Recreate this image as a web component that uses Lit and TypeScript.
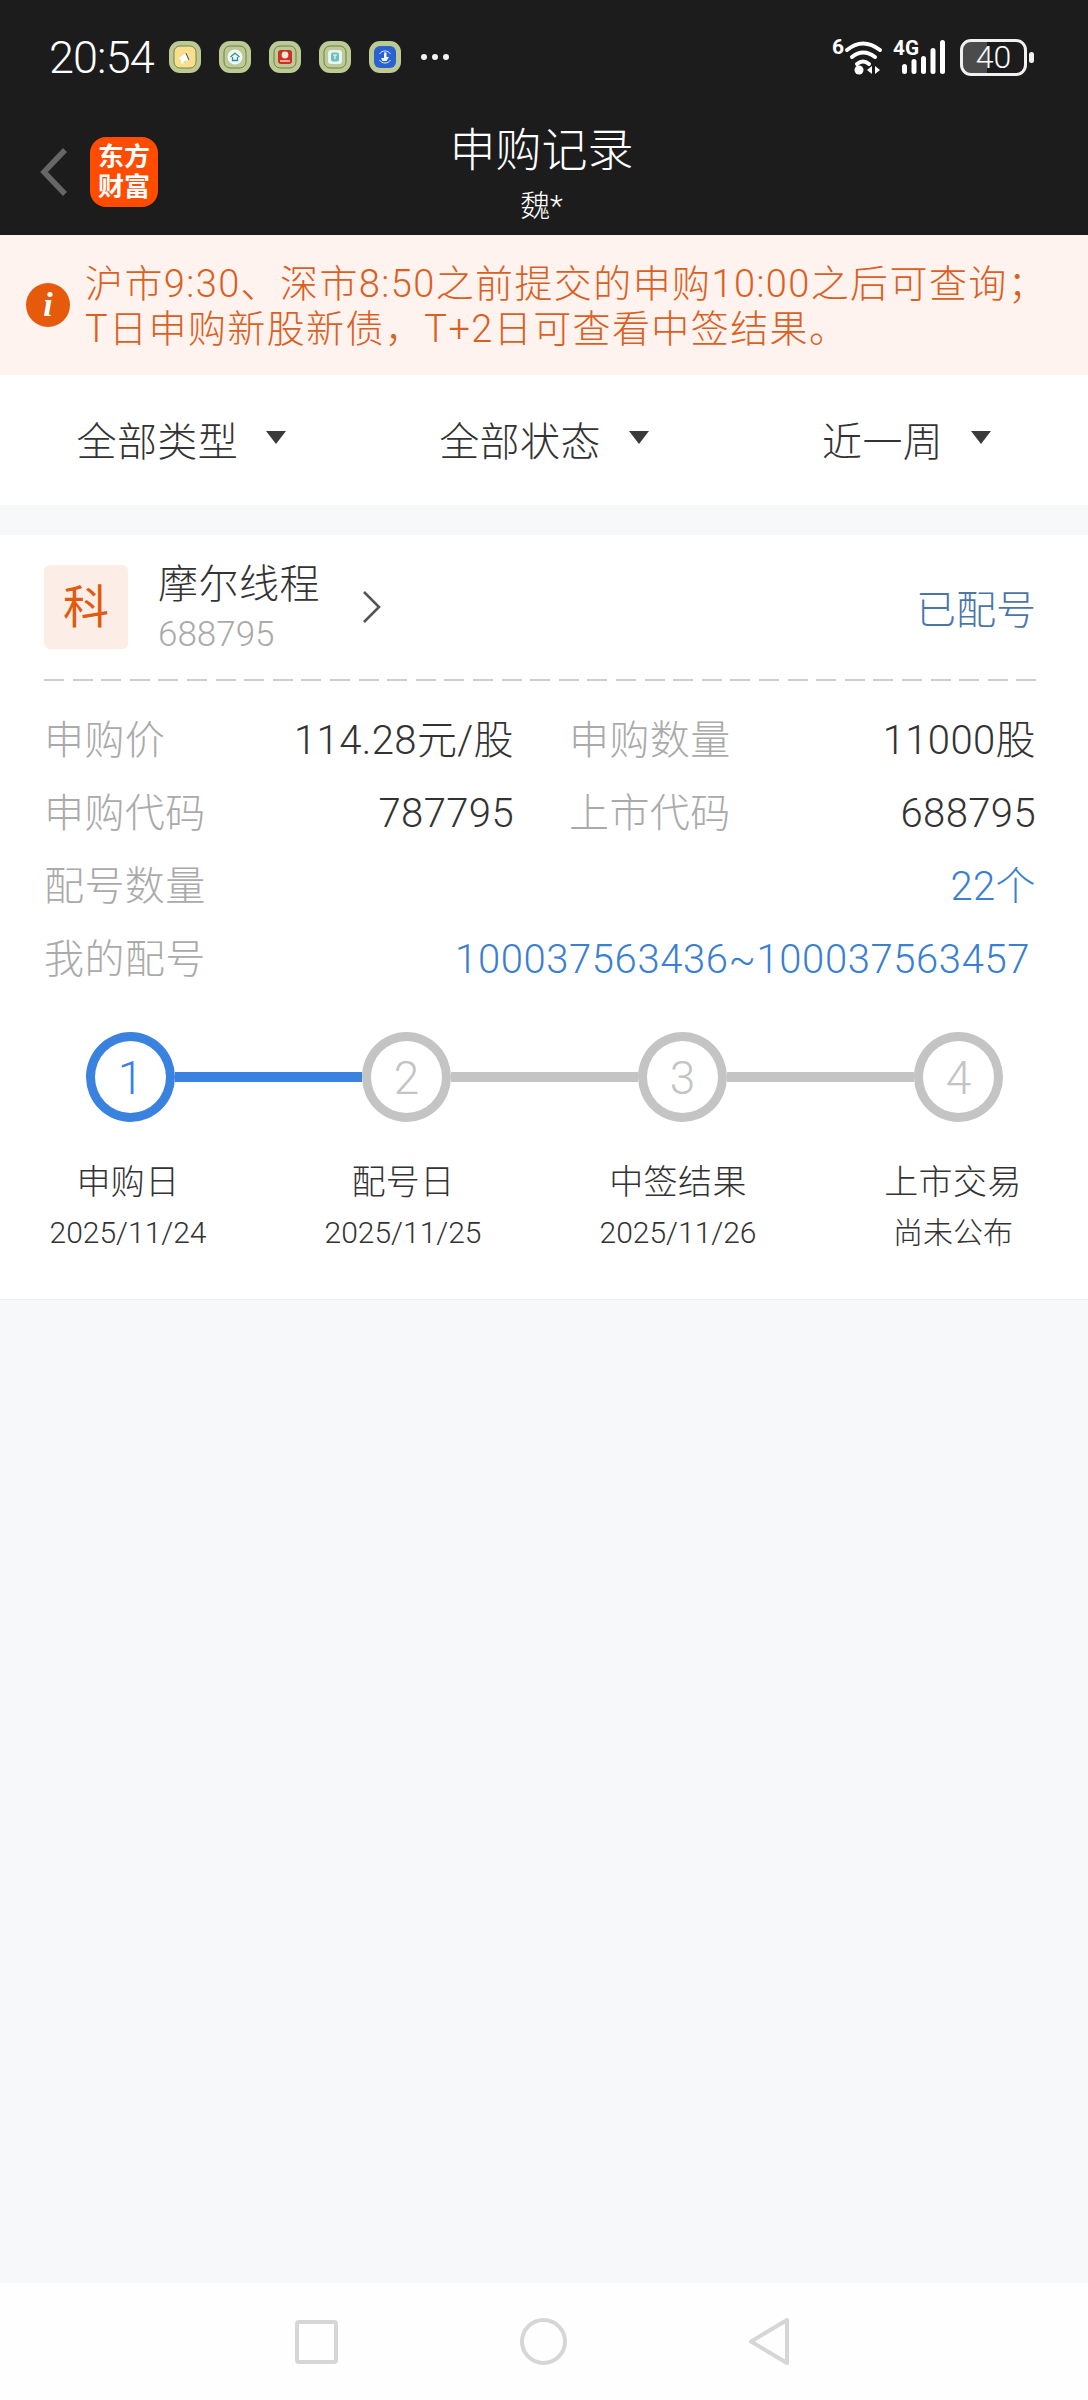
import { LitElement, html, css, svg } from "lit";
import { customElement } from "lit/decorators.js";
import { classMap } from "lit/directives/class-map.js";

const FILTERS = ["全部类型", "全部状态", "近一周"];

const STEPS = [
  { label: "申购日", date: "2025/11/24" },
  { label: "配号日", date: "2025/11/25" },
  { label: "中签结果", date: "2025/11/26" },
  { label: "上市交易", date: "尚未公布" },
];

// tiny notification badges in the status bar
const badge = (inner: unknown) => html`
  <svg class="badge" viewBox="0 0 32 32" width="32" height="32">
    <rect width="32" height="32" rx="11" fill="#bccb94"></rect>
    ${inner}
  </svg>
`;

const BADGES = [
  badge(svg`
    <rect x="5" y="5" width="22" height="22" rx="6" fill="#f7df8e" stroke="#6b6a3c" stroke-width="0.8"></rect>
    <path d="M10 17l8-6 3 8-6 1-1 3-2-1 0-3z" fill="#fff"></path>
    <path d="M17 12l3 7" stroke="#6d5a3a" stroke-width="1.2"></path>
  `),
  badge(svg`
    <rect x="5" y="5" width="22" height="22" rx="6" fill="none" stroke="#5d6a42" stroke-width="0.8"></rect>
    <circle cx="16" cy="16" r="7.5" fill="#f2f8f4"></circle>
    <path d="M11.5 16l4.5-4 4.5 4M13.5 16v3.5h5V16" fill="none" stroke="#2f8f96" stroke-width="1.3"></path>
  `),
  badge(svg`
    <rect x="5" y="5" width="22" height="22" rx="6" fill="none" stroke="#5d6a42" stroke-width="0.8"></rect>
    <rect x="9" y="9" width="14" height="14" rx="3" fill="#cf2f22"></rect>
    <circle cx="16" cy="14" r="3.4" fill="#fbe6dc"></circle>
    <path d="M11 20h10" stroke="#f6c8b8" stroke-width="1.6"></path>
  `),
  badge(svg`
    <rect x="5" y="5" width="22" height="22" rx="6" fill="none" stroke="#5d6a42" stroke-width="0.8"></rect>
    <rect x="9" y="9" width="14" height="14" rx="3" fill="#e6f5ef"></rect>
    <rect x="12" y="11.5" width="8" height="9" rx="2" fill="#6fc0bc"></rect>
    <path d="M14 14h4M16 14v4" stroke="#e6f5ef" stroke-width="1.2"></path>
  `),
  badge(svg`
    <rect x="5" y="5" width="22" height="22" rx="6" fill="#2a62d2"></rect>
    <path d="M10.5 13a6.5 6.5 0 0 1 11 0M10.5 19a6.5 6.5 0 0 0 11 0" fill="none" stroke="#e4ecfb" stroke-width="1"></path>
    <path d="M15 11.5h2.5V16H20l-2.5 4h-4L12 17h3z" fill="#f2f6fd"></path>
  `),
];

@customElement("app-root")
export class AppRoot extends LitElement {
  static styles = css`
    :host {
      display: flex;
      flex-direction: column;
      min-height: 2400px;
      background: #f7f8fa;
      font-family: Roboto, "Noto Sans CJK SC", sans-serif;
      font-weight: 300;
      color: #333;
    }

    /* Status bar */
    .status {
      height: 112px;
      background: #1c1c1c;
      color: #fff;
      display: flex;
      align-items: center;
      padding: 2px 54px 0 49px;
      box-sizing: border-box;
    }
    .time {
      font-size: 45px;
      letter-spacing: -0.9px;
      width: 120px;
    }
    .badges {
      display: flex;
      gap: 18px;
    }
    .badge {
      display: block;
    }
    .more {
      display: flex;
      gap: 5px;
      margin-left: 20px;
    }
    .more i {
      width: 6px;
      height: 6px;
      border-radius: 50%;
      background: #f2f2f2;
    }
    .status-right {
      margin-left: auto;
      display: flex;
      align-items: center;
    }
    .signal {
      display: block;
      margin-right: 15px;
    }
    .signal text {
      fill: #fff;
      font-family: Roboto, sans-serif;
      font-weight: 700;
      font-size: 21px;
    }
    .battery {
      width: 67px;
      height: 37px;
      box-sizing: border-box;
      border: 3px solid #f0f0f0;
      border-radius: 11px;
      background: linear-gradient(90deg, #4b4b4b 24px, transparent 24px);
      font-size: 32px;
      line-height: 31px;
      text-align: center;
    }
    .nub {
      width: 5px;
      height: 11px;
      border-radius: 3px;
      background: #f0f0f0;
      margin-left: 2px;
    }

    /* App bar */
    .appbar {
      height: 123px;
      background: #1c1c1c;
      color: #fff;
      display: grid;
      grid-template-columns: 1fr auto 1fr;
      align-items: center;
      padding-right: 5px;
    }
    .brand {
      display: flex;
      align-items: center;
      padding-left: 40px;
      gap: 22px;
      margin-top: -3px;
    }
    .back {
      display: block;
    }
    .logo {
      width: 68px;
      height: 70px;
      border-radius: 16px;
      background: #ff4c00;
      color: #fff;
      font-size: 26px;
      font-weight: 700;
      line-height: 30px;
      text-align: center;
      display: flex;
      align-items: center;
      justify-content: center;
    }
    .heading {
      text-align: center;
      margin-top: -2px;
    }
    .title {
      font-size: 46px;
      line-height: 58px;
    }
    .subtitle {
      font-size: 30px;
      line-height: 38px;
      margin-top: 8px;
    }

    /* Notice strip */
    .notice {
      height: 140px;
      background: #fef3ef;
      color: #db5f1f;
      display: flex;
      align-items: center;
      gap: 15px;
      padding-left: 26px;
      font-size: 38px;
      line-height: 45px;
      letter-spacing: 1.4px;
      box-sizing: border-box;
    }
    .notice-text {
      margin-top: 4px;
    }
    .info {
      width: 44px;
      height: 44px;
      border-radius: 50%;
      background: #e65a0c;
      color: #fff;
      flex: none;
      font: italic 700 34px/44px "Liberation Serif", serif;
      letter-spacing: 0;
      text-align: center;
    }

    /* Filter row */
    .filters {
      height: 130px;
      background: #fff;
      display: grid;
      grid-template-columns: repeat(3, 1fr);
      align-items: center;
      font-size: 40px;
      letter-spacing: 0.4px;
      padding-bottom: 3px;
      box-sizing: border-box;
    }
    .filter {
      display: flex;
      align-items: center;
      justify-content: center;
      gap: 28px;
    }
    .caret {
      width: 0;
      height: 0;
      border-left: 10px solid transparent;
      border-right: 10px solid transparent;
      border-top: 13px solid #3a3a3a;
      margin-top: -2px;
    }

    /* Subscription card */
    .card {
      margin-top: 30px;
      background: #fff;
      padding: 30px 52px 0 44px;
      height: 765px;
      box-sizing: border-box;
      border-bottom: 1px solid #eeeeee;
    }
    .card-head {
      display: flex;
      align-items: center;
      height: 84px;
    }
    .tag {
      width: 84px;
      height: 84px;
      border-radius: 6px;
      background: #fceee6;
      color: #e05a12;
      font-size: 46px;
      font-weight: 400;
      line-height: 84px;
      text-align: center;
      flex: none;
    }
    .name-block {
      margin-left: 30px;
      height: 84px;
    }
    .name {
      font-size: 40px;
      line-height: 50px;
      letter-spacing: 0.5px;
      margin-top: -5px;
    }
    .code {
      font-size: 35px;
      line-height: 40px;
      color: #aaa;
      margin-top: 5px;
    }
    .chevron {
      display: block;
      margin-left: 42px;
    }
    .state {
      margin-left: auto;
      font-size: 40px;
      color: #4a76a8;
    }
    .dash {
      height: 2px;
      margin: 30px 0 19px;
      background: repeating-linear-gradient(90deg, #cdcdcd 0 20px, transparent 20px 28.6px);
    }

    .fields {
      display: grid;
      grid-template-columns: 470px 467px;
      column-gap: 55px;
      grid-auto-rows: 73px;
      align-items: center;
      font-size: 40px;
      letter-spacing: 0.4px;
    }
    .field {
      display: flex;
      justify-content: space-between;
      align-items: baseline;
      color: #333;
    }
    .field.wide {
      grid-column: 1 / -1;
    }
    .field span:first-child {
      color: #aaa;
    }
    .field .link {
      color: #3a7fd0;
    }
    .inset {
      padding-right: 6px;
    }
    .inset .link {
      letter-spacing: 0.6px;
    }

    /* Progress steps */
    .track {
      display: flex;
      align-items: center;
      margin: 40px 33px 0 42px;
    }
    .dot {
      width: 89px;
      height: 90px;
      box-sizing: border-box;
      border: 9px solid #c4c4c4;
      border-radius: 50%;
      color: #c4c4c4;
      font-size: 46px;
      line-height: 74px;
      text-align: center;
      flex: none;
    }
    .dot.active {
      border-color: #3a82e0;
      color: #3a82e0;
    }
    .link-line {
      flex: 1;
      height: 10px;
      background: #c4c4c4;
    }
    .link-line.active {
      background: #3a82e0;
    }
    .step-labels {
      display: flex;
      justify-content: space-between;
      margin: 34px -1px 0 0;
    }
    .step {
      width: 168px;
      text-align: center;
      white-space: nowrap;
    }
    .step-label {
      font-size: 34px;
      line-height: 52px;
      letter-spacing: 0.4px;
    }
    .step-date {
      font-size: 30px;
      line-height: 50px;
    }

    .spacer {
      flex: 1;
    }

    /* System navigation */
    .nav {
      height: 117px;
      background: #fefefe;
      display: flex;
      align-items: center;
      justify-content: center;
      gap: 182px;
      padding-right: 4px;
    }
    .nav svg {
      display: block;
      fill: none;
      stroke: #d6d6d6;
      stroke-width: 4;
      stroke-linejoin: round;
    }
  `;

  render() {
    return html`
      <div class="status">
        <div class="time">20:54</div>
        <div class="badges">${BADGES}</div>
        <div class="more"><i></i><i></i><i></i></div>
        <div class="status-right">
          <svg class="signal" width="117" height="50" viewBox="828 31 117 50">
            <text x="832" y="53">6</text>
            <g fill="none" stroke="#fff" stroke-width="4" stroke-linecap="round">
              <path d="M847 49q16-13 33 0"></path>
              <path d="M852 56q11-9 23 0"></path>
              <path d="M857 63q6-5 12 0"></path>
            </g>
            <circle cx="859" cy="69" r="4.5" fill="#fff"></circle>
            <path d="M872 65v8l-5-4zM875 65v8l5-4z" fill="#fff"></path>
            <text x="893" y="54" textLength="26" lengthAdjust="spacingAndGlyphs">4G</text>
            <g fill="#fff">
              <rect x="902" y="63" width="5" height="10" rx="2.5"></rect>
              <rect x="911.5" y="58" width="5" height="15" rx="2.5"></rect>
              <rect x="921" y="55" width="5" height="18" rx="2.5"></rect>
              <rect x="930.5" y="47" width="5" height="26" rx="2.5"></rect>
              <rect x="940" y="39" width="5" height="34" rx="2.5"></rect>
            </g>
          </svg>
          <div class="battery">40</div>
          <div class="nub"></div>
        </div>
      </div>

      <div class="appbar">
        <div class="brand">
          <svg class="back" width="28" height="50" viewBox="0 0 28 50">
            <path d="M25 3L4 25l21 22" fill="none" stroke="#666" stroke-width="5.5"></path>
          </svg>
          <div class="logo"><div>东方<br />财富</div></div>
        </div>
        <div class="heading">
          <div class="title">申购记录</div>
          <div class="subtitle">魏*</div>
        </div>
        <div></div>
      </div>

      <div class="notice">
        <div class="info">i</div>
        <div class="notice-text">沪市9:30、深市8:50之前提交的申购10:00之后可查询；<br />T日申购新股新债，T+2日可查看中签结果。</div>
      </div>

      <div class="filters">
        ${FILTERS.map(
          (f) => html`<div class="filter"><span>${f}</span><span class="caret"></span></div>`
        )}
      </div>

      <div class="card">
        <div class="card-head">
          <div class="tag">科</div>
          <div class="name-block">
            <div class="name">摩尔线程</div>
            <div class="code">688795</div>
          </div>
          <svg class="chevron" width="20" height="32" viewBox="0 0 20 32">
            <path d="M2 1l15 15L2 31" fill="none" stroke="#555" stroke-width="2.6"></path>
          </svg>
          <div class="state">已配号</div>
        </div>
        <div class="dash"></div>
        <div class="fields">
          <div class="field"><span>申购价</span><span>114.28元/股</span></div>
          <div class="field"><span>申购数量</span><span>11000股</span></div>
          <div class="field"><span>申购代码</span><span>787795</span></div>
          <div class="field"><span>上市代码</span><span>688795</span></div>
          <div class="field wide"><span>配号数量</span><span class="link">22个</span></div>
          <div class="field wide inset">
            <span>我的配号</span><span class="link">100037563436~100037563457</span>
          </div>
        </div>
        <div class="track">
          ${STEPS.map(
            (_, i) => html`
              ${i > 0
                ? html`<div class=${classMap({ "link-line": true, active: i === 1 })}></div>`
                : ""}
              <div class=${classMap({ dot: true, active: i === 0 })}>${i + 1}</div>
            `
          )}
        </div>
        <div class="step-labels">
          ${STEPS.map(
            (s) => html`
              <div class="step">
                <div class="step-label">${s.label}</div>
                <div class="step-date">${s.date}</div>
              </div>
            `
          )}
        </div>
      </div>

      <div class="spacer"></div>

      <div class="nav">
        <svg width="43" height="44" viewBox="0 0 43 44"><rect x="2" y="2" width="39" height="40" rx="2"></rect></svg>
        <svg width="47" height="47" viewBox="0 0 47 47"><circle cx="23.5" cy="23.5" r="21.5"></circle></svg>
        <svg width="40" height="47" viewBox="0 0 40 47"><path d="M38 2v43L2 23.5z"></path></svg>
      </div>
    `;
  }
}
